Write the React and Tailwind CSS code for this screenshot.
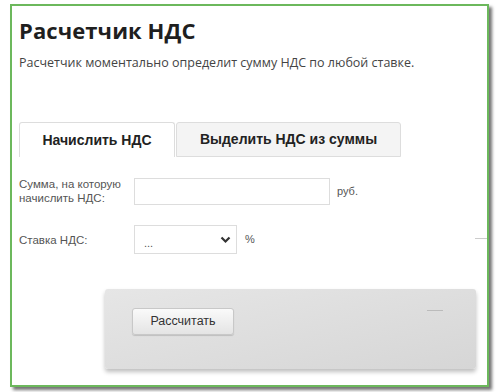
export default function App() {
  return (
    <div className="w-[500px] h-[392px] bg-white overflow-hidden" style={{ fontFamily: '"Liberation Sans", Arial, sans-serif' }}>
      <div className="ml-[10px] mt-[4px] w-[479px] h-[383px] border-2 border-[#6cb85c] shadow-[3px_3px_3px_rgba(0,0,0,0.55)] bg-white relative">
        <div className="pl-[7px] pt-[11px]">
          <h1 className="text-[22px] leading-[27px] font-bold text-[#1f1f1f] tracking-[0.1px]" style={{ fontFamily: '"Open Sans", sans-serif' }}>Расчетчик НДС</h1>
          <p className="mt-[11px] text-[12.5px] leading-[16px] text-[#444]" style={{ fontFamily: '"Open Sans", sans-serif' }}>Расчетчик моментально определит сумму НДС по любой ставке.</p>
          <div className="mt-[51px] flex items-end">
            <div className="w-[156px] h-[35px] border border-b-0 border-[#ddd] rounded-t-[3px] bg-white flex items-center justify-center text-[14px] font-bold text-[#222]">Начислить НДС</div>
            <div className="ml-[1px] w-[225px] h-[35px] border border-[#ddd] rounded-t-[3px] bg-[#f4f4f4] flex items-center justify-center text-[14px] font-bold text-[#222]">Выделить НДС из суммы</div>
          </div>
          <div className="mt-[20px] flex items-center">
            <div className="w-[115px] text-[11.5px] leading-[14px] text-[#555]">Сумма, на которую<br />начислить НДС:</div>
            <div className="w-[196px] h-[27px] border border-[#ddd] bg-white"></div>
            <span className="ml-[7px] text-[11px] text-[#555]">руб.</span>
          </div>
          <div className="mt-[20px] flex items-center">
            <div className="w-[115px] text-[11.5px] leading-[14px] text-[#555]">Ставка НДС:</div>
            <div className="w-[103px] h-[29px] border border-[#ddd] bg-white flex items-center justify-between pl-[9px] pr-[5px]">
              <span className="text-[11px] text-[#555] mt-[8px] leading-none">...</span>
              <svg width="11" height="8" viewBox="0 0 11 8"><path d="M1.5 1.5 L5.5 5.5 L9.5 1.5" fill="none" stroke="#333" strokeWidth="2.2" /></svg>
            </div>
            <span className="ml-[8px] text-[11px] text-[#555]">%</span>
          </div>
        </div>
        <div className="absolute right-0 top-[232px] w-[12px] h-[1px] bg-[#ccc]"></div>
        <div className="ml-[93px] mt-[35px] w-[371px] h-[80px] rounded-[3px] bg-gradient-to-br from-[#e6e6e6] to-[#d6d6d6] shadow-[0_3px_4px_rgba(0,0,0,0.25)] relative">
          <div className="absolute left-[322px] top-[21px] w-[16px] h-[1px] bg-[#bbb]"></div>
          <div className="absolute left-[27px] top-[19px] w-[102px] h-[27px] rounded-[3px] border border-[#c8c8c8] bg-gradient-to-b from-[#fafafa] to-[#e4e4e4] shadow-[0_1px_1px_rgba(0,0,0,0.15)] flex items-center justify-center text-[12.5px] text-[#333]">Рассчитать</div>
        </div>
      </div>
    </div>
  );
}
